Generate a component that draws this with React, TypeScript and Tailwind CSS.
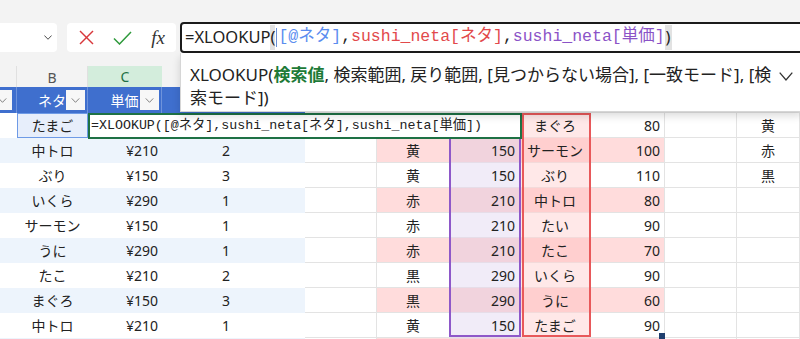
import React from 'react';

const mono = "font-['Liberation_Mono','Noto_Sans_CJK_JP',monospace]";

// name, price, qty, color, unit, lookup name, lookup value, list
const rows: string[][] = [
  ['たまご', '', '', '', '', 'まぐろ', '80', '黄'],
  ['中トロ', '¥210', '2', '黄', '150', 'サーモン', '100', '赤'],
  ['ぶり', '¥150', '3', '黄', '150', 'ぶり', '110', '黒'],
  ['いくら', '¥290', '1', '赤', '210', '中トロ', '80', ''],
  ['サーモン', '¥150', '1', '赤', '210', 'たい', '90', ''],
  ['うに', '¥290', '1', '赤', '210', 'たこ', '70', ''],
  ['たこ', '¥210', '2', '黒', '290', 'いくら', '90', ''],
  ['まぐろ', '¥150', '3', '黒', '290', 'うに', '60', ''],
  ['中トロ', '¥210', '1', '黄', '150', 'たまご', '90', ''],
  ['', '', '', '', '', '', '', ''],
];

const Chevron = ({ className }: { className?: string }) => (
  <svg className={className} viewBox="0 0 10 6" fill="none" stroke="currentColor" strokeWidth="1.1">
    <polyline points="0.5,0.5 5,5.2 9.5,0.5" />
  </svg>
);

const FilterButton = () => (
  <div className="absolute right-[2px] top-[3px] w-[19px] h-[20px] bg-[#f7f7f7] flex items-center justify-center">
    <Chevron className="w-[9px] h-[5px] text-[#777]" />
  </div>
);

export default function App() {
  return (
    <div className="relative w-[800px] h-[339px] overflow-hidden bg-white text-[#222] font-['Noto_Sans','Noto_Sans_CJK_JP',sans-serif]">
      {/* formula bar */}
      <div className="bg-[#f3f3f3] h-[66px] pt-[22px]">
        <div className="flex items-center h-[31px]">
          <div className="w-[57px] h-[29px] shrink-0 bg-white rounded-r-[4px] flex items-center justify-end pr-[5px]">
            <Chevron className="w-[8px] h-[5px] text-[#333]" />
          </div>
          <div className="ml-[10px] w-[109px] h-[29px] shrink-0 bg-white rounded-[4px] flex items-center pl-[2px]">
            <div className="w-[36px] flex justify-center">
              <svg className="w-[15px] h-[15px]" viewBox="0 0 15 15" fill="none" stroke="#d8373b" strokeWidth="1.4">
                <line x1="1" y1="1" x2="14" y2="14" />
                <line x1="14" y1="1" x2="1" y2="14" />
              </svg>
            </div>
            <div className="w-[36px] flex justify-center">
              <svg className="w-[19px] h-[14px]" viewBox="0 0 19 14" fill="none" stroke="#2f9a3c" strokeWidth="1.5">
                <polyline points="1,7.5 6.5,13 18,1" />
              </svg>
            </div>
            <div className="w-[36px] flex justify-center font-['Liberation_Serif',serif] italic text-[19px] leading-none text-[#333]">
              fx
            </div>
          </div>
          <div className="ml-[4px] w-[640px] h-[31px] shrink-0 border-2 border-[#1b1b1b] rounded-[4px] bg-white flex items-center pl-[3px] text-[16.5px] whitespace-nowrap">
            <span>=XLOOKUP</span>
            <span className="bg-[#e2e2e2]">(</span>
            <span className="w-px h-[19px] bg-[#6b8fd6] mx-[1px]" />
            <span className={`${mono} text-[16.5px] text-[#5b8def]`}>[@ネタ]</span>
            <span className={`${mono} text-[16.5px]`}>,</span>
            <span className={`${mono} text-[16.5px] text-[#e2494b]`}>sushi_neta[ネタ]</span>
            <span className={`${mono} text-[16.5px]`}>,</span>
            <span className={`${mono} text-[16.5px] text-[#8b53c7]`}>sushi_neta[単価]</span>
            <span className="bg-[#e2e2e2] px-[1px]">)</span>
          </div>
        </div>
      </div>

      {/* column letters */}
      <div className="grid grid-cols-[17px_71px_74px_71px_72px_72px_73px_70px_70px_75px_72px_63px] h-[21px] bg-[#f3f3f3] text-[14px] text-[#555]">
        <div className="border-r border-[#e0e0e0]" />
        <div className="border-r border-[#e0e0e0] flex items-center justify-center">B</div>
        <div className="bg-[#d3eddc] border-b-2 border-[#1e7145] text-[#1e7145] flex items-center justify-center">C</div>
        {Array.from({ length: 9 }).map((_, i) => (
          <div key={i} className="border-r border-[#e0e0e0]" />
        ))}
      </div>

      {/* table header */}
      <div className="grid grid-cols-[17px_71px_74px_71px_72px_72px_73px_70px_70px_75px_72px_63px] h-[26px] text-[14px]">
        <div className="relative bg-[#3f6fce] border-r border-[#6f93db]">
          <div className="absolute right-[4px] top-[3px] w-[19px] h-[20px] bg-[#f7f7f7] flex items-center justify-center">
            <Chevron className="w-[9px] h-[5px] text-[#777]" />
          </div>
        </div>
        <div className="relative bg-[#3f6fce] text-white flex items-center justify-center border-r border-[#6f93db]">
          ネタ
          <FilterButton />
        </div>
        <div className="relative bg-[#3f6fce] text-white flex items-center justify-center border-r border-[#6f93db]">
          単価
          <FilterButton />
        </div>
        <div className="bg-[#3f6fce]" />
        <div className="bg-[#3f6fce]" />
        {Array.from({ length: 7 }).map((_, i) => (
          <div key={i} className="border-r border-b border-[#e3e3e3]" />
        ))}
      </div>

      {/* data rows */}
      <div className="relative">
        {rows.map((r, i) => {
          const even = i % 2 === 1;
          return (
            <div
              key={i}
              className="grid grid-cols-[17px_71px_74px_71px_72px_72px_73px_70px_70px_75px_72px_63px] h-[25px] text-[14px]"
            >
              <div className={even ? 'bg-[#edf4fc]' : 'bg-white'} />
              <div
                className={
                  i === 0
                    ? 'bg-[#e7eefb] border-[1.5px] border-[#6e9ae6] flex items-center justify-center'
                    : even
                      ? 'bg-[#edf4fc] flex items-center justify-center'
                      : 'bg-white flex items-center justify-center'
                }
              >
                {r[0]}
              </div>
              <div className={`${even ? 'bg-[#edf4fc]' : 'bg-white'} flex items-center justify-end pr-[4px]`}>{r[1]}</div>
              <div className={`${even ? 'bg-[#edf4fc]' : 'bg-white'} flex items-center justify-end pr-[3px]`}>{r[2]}</div>
              <div className={even ? 'bg-[#edf4fc]' : 'bg-white'} />
              <div className="bg-white border-r border-b border-[#e3e3e3]" />
              <div className={`${even ? 'bg-[#ffdcdc]' : 'bg-white'} border-r border-b border-[#e3e3e3] flex items-center justify-center`}>
                {r[3]}
              </div>
              <div className={`${even ? 'bg-[#f1d3dd]' : 'bg-[#f1ecf8]'} border-b border-[#e6dde8] flex items-center justify-end pr-[5px]`}>
                {r[4]}
              </div>
              <div className={`${even ? 'bg-[#ffcfcf]' : 'bg-[#ffe8e8]'} border-b border-[#f3dada] flex items-center justify-center`}>
                {r[5]}
              </div>
              <div className={`${even ? 'bg-[#ffdcdc]' : 'bg-white'} border-r border-b border-[#e3e3e3] flex items-center justify-end pr-[4px]`}>
                {r[6]}
              </div>
              <div className="bg-white border-r border-b border-[#e3e3e3]" />
              <div className="bg-white border-r border-b border-[#e3e3e3] flex items-center justify-center">{r[7]}</div>
            </div>
          );
        })}

        {/* reference outlines */}
        <div className="absolute left-[449px] top-0 w-[72px] h-[224px] border-2 border-[#8e58c9]" />
        <div className="absolute left-[522px] top-0 w-[69px] h-[224px] border-2 border-[#e8585a]" />

        {/* in-cell editor */}
        <div className={`absolute left-[88px] top-0 w-[434px] h-[26px] border-2 border-[#1e7145] bg-white flex items-center pl-[1px] ${mono} text-[13.3px] whitespace-nowrap`}>
          =XLOOKUP([@ネタ],sushi_neta[ネタ],sushi_neta[単価])
        </div>

        {/* fill handle */}
        <div className="absolute left-[659px] top-[220px] w-[6px] h-[6px] bg-[#1f3f6e]" />
      </div>

      {/* function tooltip */}
      <div className="absolute left-[180px] top-[53px] w-[622px] h-[59px] bg-white border border-t-0 border-[#d6d6d6] shadow-[0_4px_8px_rgba(0,0,0,0.14)] pl-[9px] pt-[10px] text-[17px] leading-[23px] text-[#222]">
        <div className="whitespace-nowrap">
          XLOOKUP(<span className="text-[#1d7a37] font-bold">検索値</span>, 検索範囲, 戻り範囲, [見つからない場合], [一致モード], [検
        </div>
        <div className="whitespace-nowrap">索モード])</div>
        <svg className="absolute left-[598px] top-[19px] w-[14px] h-[9px]" viewBox="0 0 14 9" fill="none" stroke="#333" strokeWidth="1.3">
          <polyline points="0.7,0.7 7,8 13.3,0.7" />
        </svg>
      </div>
    </div>
  );
}
